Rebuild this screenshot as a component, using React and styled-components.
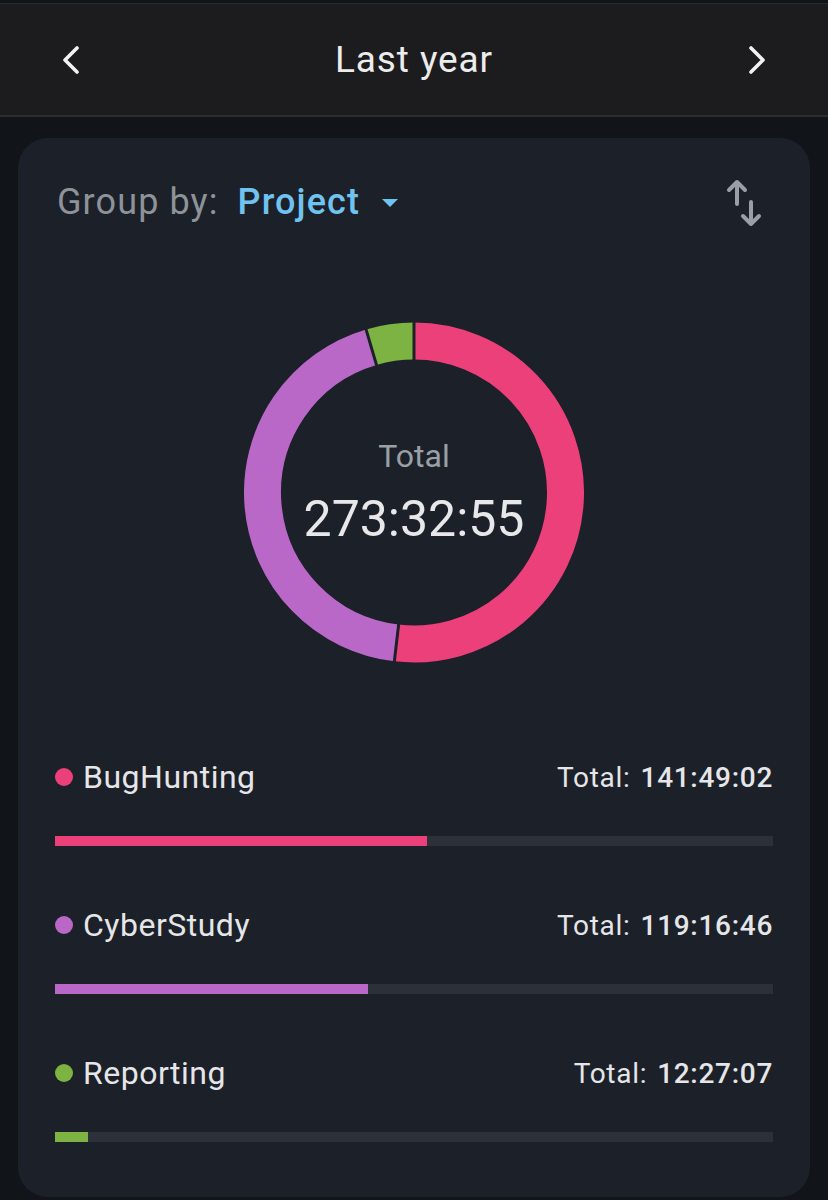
import styled, { createGlobalStyle } from "styled-components";

const Global = createGlobalStyle`
  html,body{margin:0;padding:0;background:#111418;}
  body{font-family:Roboto,"Noto Sans",sans-serif;-webkit-font-smoothing:antialiased;}
`;

const Page = styled.div`width:828px;min-height:1200px;background:#111418;padding-top:3px;box-sizing:border-box;`;
const Header = styled.header`
  height:111px;background:#1c1c1e;border-top:1px solid #2a2a2d;border-bottom:2px solid #2d2d30;
  display:flex;align-items:center;justify-content:space-between;padding:0 62px;
`;
const Title = styled.h1`margin:0;font-size:37px;font-weight:400;color:#ececec;letter-spacing:0.9px;`;
const NavBtn = styled.button`background:none;border:0;padding:0;display:flex;cursor:pointer;`;

const Card = styled.section`
  margin:21px 18px 0;background:#1c2028;border-radius:30px;padding:0 37px 55px;
`;
const TopRow = styled.div`height:130px;display:flex;align-items:center;justify-content:space-between;padding:0 7px 0 2px;`;
const Group = styled.div`display:flex;align-items:center;font-size:36px;letter-spacing:1.1px;margin-top:-3px;`;
const Muted = styled.span`color:#8e939a;`;
const Accent = styled.span`color:#70c3f0;font-weight:500;margin-left:19px;`;
const Caret = styled.span`
  width:0;height:0;margin-left:22px;margin-top:2px;
  border-left:8px solid transparent;border-right:8px solid transparent;border-top:8px solid #70c3f0;
`;

const ChartWrap = styled.div`margin-top:54px;height:341px;display:flex;justify-content:center;position:relative;`;
const Center = styled.div`
  position:absolute;inset:0;display:flex;flex-direction:column;align-items:center;justify-content:center;
`;
const CenterLabel = styled.div`font-size:32px;color:#9aa0a6;margin-top:-1px;`;
const CenterValue = styled.div`font-size:50px;color:#e8e8ea;margin-top:15px;`;

const List = styled.div`margin-top:94px;display:flex;flex-direction:column;gap:59px;`;
const Row = styled.div`display:flex;flex-direction:column;`;
const RowHead = styled.div`height:40px;display:flex;align-items:center;justify-content:space-between;`;
const Name = styled.div`display:flex;align-items:center;font-size:32px;color:#e6e6e8;letter-spacing:0.5px;`;
const Dot = styled.span`width:18px;height:18px;border-radius:50%;background:${p => p.$c};margin:0 10px 0 0;`;
const Sum = styled.div`font-size:28px;color:#e6e6e8;letter-spacing:0.7px;`;
const Strong = styled.b`font-weight:500;margin-left:10px;`;
const Track = styled.div`margin-top:39px;height:10px;background:#2c3038;`;
const Fill = styled.div`height:100%;background:${p => p.$c};`;

const items = [
  { name: "BugHunting", time: "141:49:02", color: "#ec407a" },
  { name: "CyberStudy", time: "119:16:46", color: "#ba68c8" },
  { name: "Reporting", time: "12:27:07", color: "#7cb342" },
];
const secs = t => t.split(":").reduce((a, v) => a * 60 + Number(v), 0);
const total = items.reduce((a, i) => a + secs(i.time), 0);

function Donut() {
  const cx = 170, cy = 170, r = 151.5;
  const pt = (deg, rad) => {
    const a = (deg - 90) * Math.PI / 180;
    return [cx + rad * Math.cos(a), cy + rad * Math.sin(a)];
  };
  let start = 0;
  const arcs = [], cuts = [];
  items.forEach(it => {
    const sweep = secs(it.time) / total * 360;
    const end = start + sweep;
    const [x1, y1] = pt(start, r), [x2, y2] = pt(end, r);
    arcs.push(
      <path key={it.name} d={`M${x1} ${y1}A${r} ${r} 0 ${sweep > 180 ? 1 : 0} 1 ${x2} ${y2}`}
        fill="none" stroke={it.color} strokeWidth="37" />
    );
    const [a1, b1] = pt(start, 132), [a2, b2] = pt(start, 171);
    cuts.push(<line key={"c" + it.name} x1={a1} y1={b1} x2={a2} y2={b2} stroke="#1c2028" strokeWidth="3" />);
    start = end;
  });
  return (
    <svg width="340" height="341" viewBox="0 0 340 340">
      {arcs}
      {cuts}
    </svg>
  );
}

const Chevron = ({ left }) => (
  <svg width="18" height="28" viewBox="0 0 18 28">
    <path d={left ? "M15 2L3 14l12 12" : "M3 2l12 12L3 26"} fill="none" stroke="#f2f2f2" strokeWidth="3.6" strokeLinecap="round" strokeLinejoin="round" />
  </svg>
);

const SwapIcon = () => (
  <svg width="40" height="48" viewBox="0 0 40 48">
    <g fill="none" stroke="#9a9ea5" strokeWidth="4" strokeLinecap="round" strokeLinejoin="round">
      <path d="M11 3v22M3 11l8-8 8 8" />
      <path d="M25 23v22M17 37l8 8 8-8" />
    </g>
  </svg>
);

export default function App() {
  return (
    <Page>
      <Global />
      <Header>
        <NavBtn aria-label="previous"><Chevron left /></NavBtn>
        <Title>Last year</Title>
        <NavBtn aria-label="next"><Chevron /></NavBtn>
      </Header>
      <Card>
        <TopRow>
          <Group>
            <Muted>Group by:</Muted>
            <Accent>Project</Accent>
            <Caret />
          </Group>
          <SwapIcon />
        </TopRow>
        <ChartWrap>
          <Donut />
          <Center>
            <CenterLabel>Total</CenterLabel>
            <CenterValue>273:32:55</CenterValue>
          </Center>
        </ChartWrap>
        <List>
          {items.map(it => (
            <Row key={it.name}>
              <RowHead>
                <Name><Dot $c={it.color} />{it.name}</Name>
                <Sum>Total:<Strong>{it.time}</Strong></Sum>
              </RowHead>
              <Track>
                <Fill $c={it.color} style={{ width: `${(secs(it.time) / total) * 100}%` }} />
              </Track>
            </Row>
          ))}
        </List>
      </Card>
    </Page>
  );
}
